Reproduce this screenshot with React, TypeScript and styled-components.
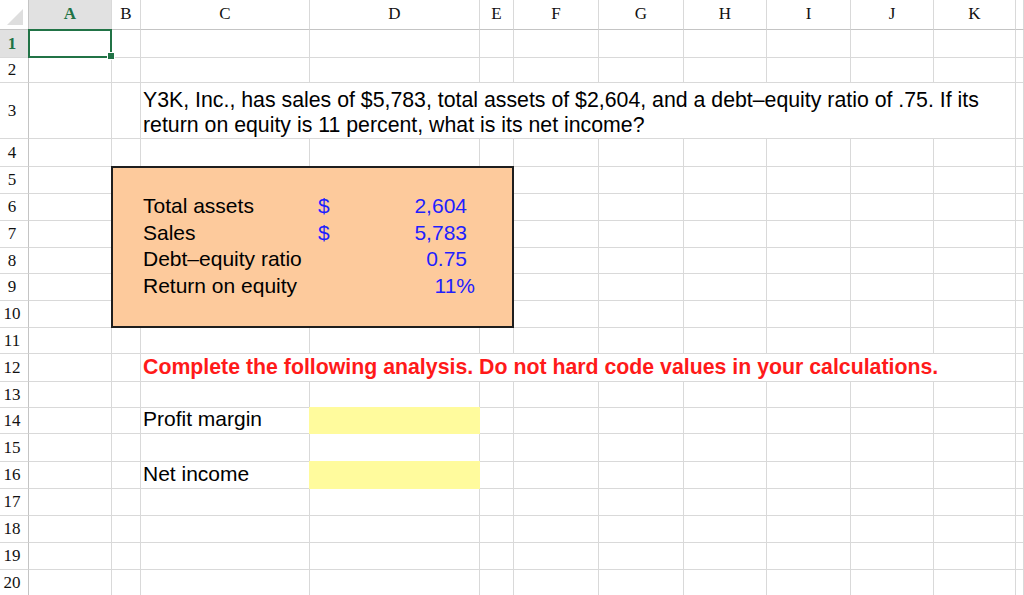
import React from 'react';
import styled, { createGlobalStyle } from 'styled-components';

const COLS = [29, 83, 29, 169, 170, 34, 85, 85, 83, 84, 83, 82];
const LETTERS = ['A', 'B', 'C', 'D', 'E', 'F', 'G', 'H', 'I', 'J', 'K', ''];
const ROWS = [28, 25, 56, 28, 27, 27, 27, 26, 27, 27, 26, 28, 26, 26, 28, 27, 27, 27, 27, 27];

const GRID = '#d9d9d9';
const HEAD_LINE = '#c4c4c4';
const GREEN = '#217346';

const colTemplate = `${COLS.map((w) => `${w}px`).join(' ')} 1fr`;
const rowTemplate = `30px ${ROWS.map((h) => `${h}px`).join(' ')}`;

const Global = createGlobalStyle`
  html, body {
    margin: 0;
    padding: 0;
    background: #ffffff;
    overflow: hidden;
  }
`;

const Stage = styled.div`
  display: grid;
  width: 1024px;
  height: 595px;
  overflow: hidden;
  background: #ffffff;
`;

const Layer = styled.div`
  grid-area: 1 / 1;
  display: grid;
  grid-template-columns: ${colTemplate};
  grid-template-rows: ${rowTemplate};
`;

const Corner = styled.div`
  border-right: 1px solid ${HEAD_LINE};
  border-bottom: 1px solid ${HEAD_LINE};
  display: flex;
  align-items: flex-end;
  justify-content: flex-end;
  padding: 0 5px 4px 0;
`;

const ColHeader = styled.div<{ $active?: boolean }>`
  border-right: 1px solid ${GRID};
  border-bottom: 1px solid ${HEAD_LINE};
  background: ${(p) => (p.$active ? '#e1e1e1' : '#ffffff')};
  color: ${(p) => (p.$active ? GREEN : '#111111')};
  font-family: 'Liberation Serif', 'Times New Roman', serif;
  font-weight: ${(p) => (p.$active ? 700 : 400)};
  font-size: 17px;
  display: flex;
  align-items: center;
  justify-content: center;
  padding-bottom: 2px;
`;

const RowHeader = styled.div<{ $active?: boolean }>`
  border-right: 1px solid ${HEAD_LINE};
  border-bottom: 1px solid ${GRID};
  background: ${(p) => (p.$active ? '#e1e1e1' : '#ffffff')};
  color: ${(p) => (p.$active ? GREEN : '#111111')};
  font-family: 'Liberation Serif', 'Times New Roman', serif;
  font-weight: ${(p) => (p.$active ? 700 : 400)};
  font-size: 17px;
  display: flex;
  align-items: center;
  justify-content: center;
  padding-right: 4px;
`;

const Cell = styled.div`
  border-right: 1px solid ${GRID};
  border-bottom: 1px solid ${GRID};
`;

const Place = styled.div<{ $area: string }>`
  grid-area: ${(p) => p.$area};
  min-width: 0;
`;

const Selection = styled(Place)`
  margin: -1px 0 0 -1px;
  border: 2px solid ${GREEN};
  position: relative;
`;

const Handle = styled.span`
  position: absolute;
  right: -5px;
  bottom: -4px;
  width: 6px;
  height: 6px;
  background: ${GREEN};
  border: 1px solid #ffffff;
`;

const TextCell = styled(Place)<{ $cover?: boolean; $bold?: boolean; $color?: string }>`
  background: ${(p) => (p.$cover ? '#ffffff' : 'transparent')};
  margin: ${(p) => (p.$cover ? '0 1px 1px 0' : '0')};
  display: flex;
  align-items: flex-end;
  padding: 0 0 ${(p) => (p.$bold ? 2 : 3)}px 2px;
  font-family: 'Liberation Sans', Arial, sans-serif;
  font-size: ${(p) => (p.$bold ? 21.3 : 21)}px;
  line-height: 24px;
  font-weight: ${(p) => (p.$bold ? 700 : 400)};
  color: ${(p) => p.$color || '#000000'};
  white-space: nowrap;
`;

const WrapText = styled(Place)`
  background: #ffffff;
  margin: 0 1px 1px 0;
  display: flex;
  flex-direction: column;
  justify-content: flex-end;
  padding: 0 0 0 2px;
  font-family: 'Liberation Sans', Arial, sans-serif;
  font-size: 21.3px;
  line-height: 25px;
  color: #000000;
  white-space: nowrap;
`;

const Box = styled(Place)`
  margin: -1px 0 0 -1px;
  background: #fdca9c;
  border: 2px solid #1e1e1e;
`;

const ValueCell = styled(Place)<{ $padRight: number }>`
  display: flex;
  align-items: flex-end;
  justify-content: space-between;
  padding: 0 ${(p) => p.$padRight}px 3px 8px;
  font-family: 'Liberation Sans', Arial, sans-serif;
  font-size: 21px;
  line-height: 24px;
  color: #1f1fff;
  white-space: nowrap;
`;

const Fill = styled(Place)`
  margin: -1px 0 0 -1px;
  background: #fffb9d;
`;

const TriangleIcon = () => (
  <svg width="16" height="16" viewBox="0 0 16 16">
    <polygon points="16,0 16,16 0,16" fill="#dedede" />
  </svg>
);

const inputs = [
  { label: 'Total assets', cur: '$', value: '2,604', pad: 13 },
  { label: 'Sales', cur: '$', value: '5,783', pad: 13 },
  { label: 'Debt–equity ratio', cur: '', value: '0.75', pad: 13 },
  { label: 'Return on equity', cur: '', value: '11%', pad: 5 },
];

export default function App() {
  const gridCells: React.ReactNode[] = [];
  gridCells.push(
    <Corner key="corner">
      <TriangleIcon />
    </Corner>
  );
  LETTERS.forEach((l, i) => {
    gridCells.push(
      <ColHeader key={`h${i}`} $active={i === 0}>
        {l}
      </ColHeader>
    );
  });
  ROWS.forEach((_, r) => {
    gridCells.push(
      <RowHeader key={`r${r}`} $active={r === 0}>
        {r + 1}
      </RowHeader>
    );
    LETTERS.forEach((_, c) => {
      gridCells.push(<Cell key={`c${r}-${c}`} />);
    });
  });

  return (
    <>
      <Global />
      <Stage>
        <Layer>{gridCells}</Layer>
        <Layer>
          <Selection $area="2 / 2 / 3 / 3">
            <Handle />
          </Selection>
          <WrapText $area="4 / 4 / 5 / 13">
            <span>Y3K, Inc., has sales of $5,783, total assets of $2,604, and a debt–equity ratio of .75. If its</span>
            <span>return on equity is 11 percent, what is its net income?</span>
          </WrapText>
          <Box $area="6 / 3 / 12 / 7" />
          {inputs.map((row, i) => (
            <React.Fragment key={row.label}>
              <TextCell $area={`${7 + i} / 4 / ${8 + i} / 5`}>{row.label}</TextCell>
              <ValueCell $area={`${7 + i} / 5 / ${8 + i} / 6`} $padRight={row.pad}>
                <span>{row.cur}</span>
                <span>{row.value}</span>
              </ValueCell>
            </React.Fragment>
          ))}
          <TextCell $area="13 / 4 / 14 / 13" $cover $bold $color="#ff1a1a">
            Complete the following analysis. Do not hard code values in your calculations.
          </TextCell>
          <TextCell $area="15 / 4 / 16 / 5">Profit margin</TextCell>
          <Fill $area="15 / 5 / 16 / 6" />
          <TextCell $area="17 / 4 / 18 / 5">Net income</TextCell>
          <Fill $area="17 / 5 / 18 / 6" />
        </Layer>
      </Stage>
    </>
  );
}
